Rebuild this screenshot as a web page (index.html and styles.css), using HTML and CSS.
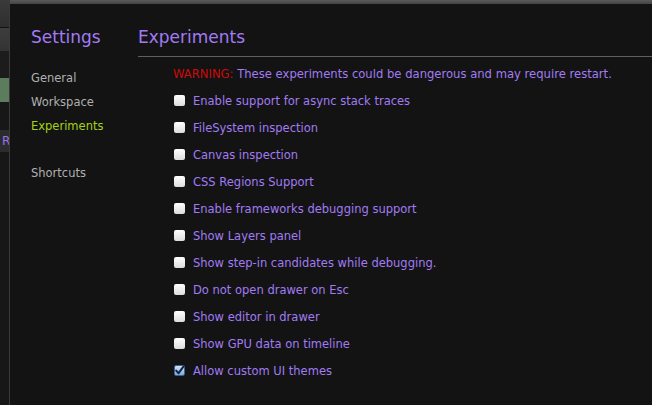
FILE: index.html
```html
<!DOCTYPE html>
<html>
<head>
<meta charset="utf-8">
<link rel="stylesheet" href="styles.css">
</head>
<body>
<div class="page">
  <div class="strip">
    <div class="s s1"></div>
    <div class="s s2"></div>
    <div class="s s3"></div>
    <div class="s s4"></div>
    <div class="s s5"></div>
    <div class="s s6">R</div>
    <div class="s s7"></div>
  </div>
  <div class="right">
    <div class="topbar"></div>
    <div class="dialog">
      <nav class="side">
        <h1 class="title">Settings</h1>
        <ul class="tabs">
          <li>General</li>
          <li>Workspace</li>
          <li class="active">Experiments</li>
          <li class="gap"></li>
          <li>Shortcuts</li>
        </ul>
      </nav>
      <main class="content">
        <h1 class="title head">Experiments</h1>
        <div class="body">
          <p class="warn"><span class="red">WARNING:</span> These experiments could be dangerous and may require restart.</p>
          <ul class="opts">
            <li><span class="cb"></span>Enable support for async stack traces</li>
            <li><span class="cb"></span>FileSystem inspection</li>
            <li><span class="cb"></span>Canvas inspection</li>
            <li><span class="cb"></span>CSS Regions Support</li>
            <li><span class="cb"></span>Enable frameworks debugging support</li>
            <li><span class="cb"></span>Show Layers panel</li>
            <li><span class="cb"></span>Show step-in candidates while debugging.</li>
            <li><span class="cb"></span>Do not open drawer on Esc</li>
            <li><span class="cb"></span>Show editor in drawer</li>
            <li><span class="cb"></span>Show GPU data on timeline</li>
            <li><span class="cb checked"><svg width="11" height="11" viewBox="0 0 11 11"><path d="M2.2 5.6 L4.6 8.2 L9.4 1.6" fill="none" stroke="#10244a" stroke-width="2" stroke-linecap="round" stroke-linejoin="round"/></svg></span>Allow custom UI themes</li>
          </ul>
        </div>
      </main>
    </div>
  </div>
</div>
</body>
</html>
```
FILE: styles.css
```css
html, body {
  margin: 0;
  padding: 0;
  background: #131313;
  width: 652px;
  height: 405px;
  overflow: hidden;
}
.page {
  display: flex;
  height: 405px;
  font-family: "DejaVu Sans", "Lucida Grande", sans-serif;
}
.strip {
  width: 9px;
  flex: none;
  display: flex;
  flex-direction: column;
  background: #1a1a1a;
  border-right: 1px solid #3a3a3a;
}
.s { flex: none; overflow: hidden; }
.s1 { height: 27px; background: linear-gradient(#3a3a3a, #2e2e2e); border-bottom: 1px solid #111; }
.s2 { height: 23px; background: linear-gradient(#3e3e3e, #333); }
.s3 { height: 27px; background: #1c1c1c; }
.s4 { height: 24px; background: #5d7c5e; }
.s5 { height: 28px; background: #171717; }
.s6 { height: 22px; background: #2c2c2c; color: #9a72f0; font-size: 12px; line-height: 22px; padding-left: 2px; }
.s7 { flex: 1; background: #171717; }
.right {
  flex: 1;
  display: flex;
  flex-direction: column;
  min-width: 0;
}
.topbar {
  height: 4px;
  flex: none;
  background: linear-gradient(#5a5a5a, #444);
}
.dialog {
  flex: 1;
  display: flex;
  background: #131313;
  padding: 21px 0 0 21px;
}
.side {
  width: 107px;
  flex: none;
}
.title {
  margin: 0;
  font-size: 17px;
  font-weight: normal;
  line-height: 24px;
  color: #a27bf4;
}
.tabs {
  list-style: none;
  margin: 17px 0 0;
  padding: 0;
}
.tabs li {
  font-size: 11.5px;
  line-height: 24px;
  height: 24px;
  color: #b0b0b0;
}
.tabs li.active { color: #a4d218; }
.tabs li.gap { height: 23px; }
.content {
  flex: 1;
  min-width: 0;
}
.head {
  padding-bottom: 7px;
  border-bottom: 1px solid #5e5e5e;
}
.body {
  padding-left: 35px;
}
.warn {
  margin: 8px 0 4px;
  font-size: 11.6px;
  line-height: 18px;
  color: #a27bf4;
  white-space: nowrap;
}
.red { color: #cc0a0a; }
.opts {
  list-style: none;
  margin: 0;
  padding: 0;
}
.opts li {
  display: flex;
  align-items: center;
  height: 27px;
  font-size: 11.5px;
  color: #a27bf4;
  white-space: nowrap;
}
.cb {
  width: 11px;
  height: 11px;
  margin: 0 8px 0 1px;
  box-sizing: border-box;
  border-radius: 2px;
  background: linear-gradient(#ffffff, #dcdcdc);
  flex: none;
  display: flex;
}
.cb.checked {
  background: linear-gradient(#d2e4f8, #7fa9dc);
  border: 1px solid #40608e;
}
.cb.checked svg { margin: -1px; }
```
